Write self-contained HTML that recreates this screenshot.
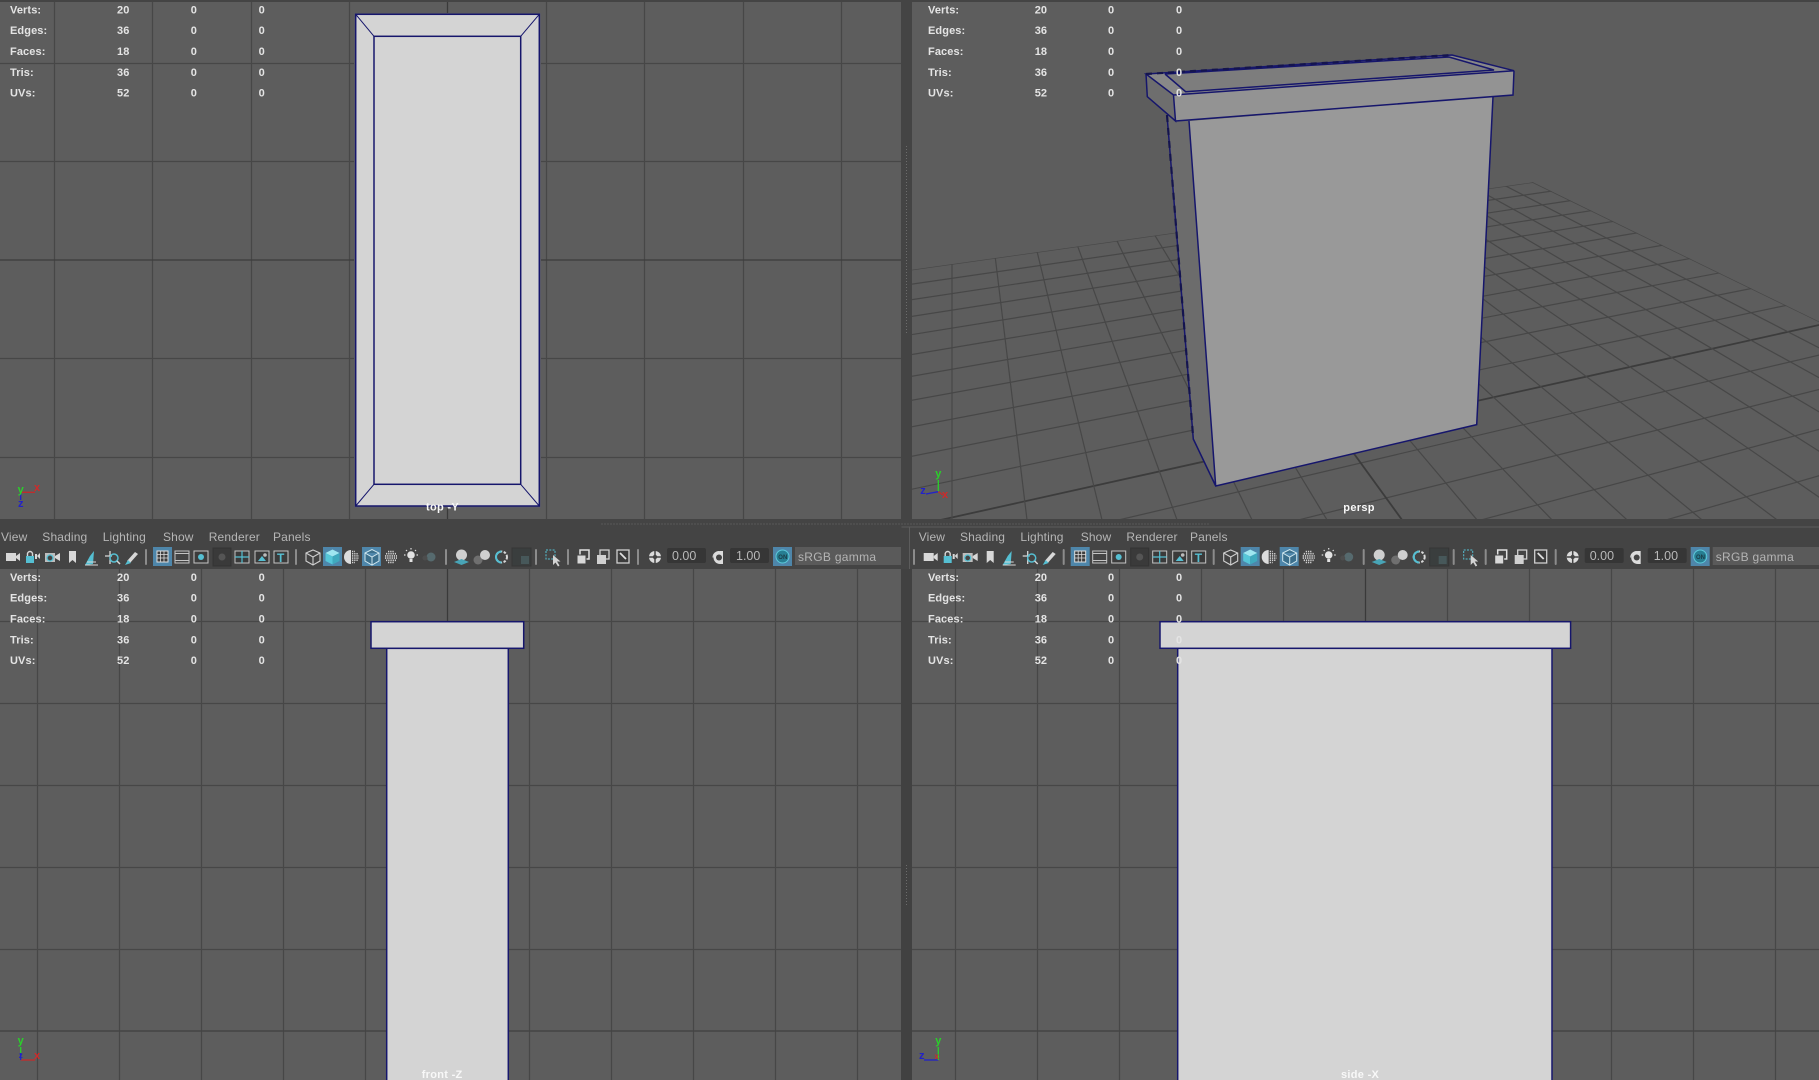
<!DOCTYPE html>
<html><head><meta charset="utf-8"><title>Viewports</title>
<style>
html,body{margin:0;padding:0;background:#444;width:1819px;height:1080px;overflow:hidden}
svg{display:block;font-family:"Liberation Sans",sans-serif}
.s{font-size:11px;font-weight:bold;fill:#e4e4e4;letter-spacing:.1px}
.m{font-size:12px;fill:#b6b6b6;letter-spacing:.15px}
.l{font-size:11px;fill:#f8f8f8;letter-spacing:.3px;font-weight:bold}
.g line{stroke:#474747;stroke-width:1.2}
.w{stroke:#16166c;stroke-width:1.5;fill:none}
.ax{font-size:11px;font-weight:bold}
</style></head><body>
<svg width="1819" height="1080" viewBox="0 0 1819 1080" xmlns="http://www.w3.org/2000/svg">
<defs>
<clipPath id="cg"><polygon points="912,269.8 1533,182.3 1819,321.5 1819,519 912,519"/></clipPath>
<clipPath id="c1"><rect x="0" y="2" width="901" height="517"/></clipPath>
<clipPath id="c3"><rect x="0" y="569" width="901" height="511"/></clipPath>
<clipPath id="c4"><rect x="912" y="569" width="907" height="511"/></clipPath>
<g id="tb">
 <!-- camera tools -->
 <rect x="6" y="553" width="10" height="8" fill="#d8d8d8"/><path d="M16 556l4-3v8l-4-3z" fill="#d8d8d8"/>
 <rect x="26" y="556" width="8" height="7" fill="#55bfd2"/><path d="M27.500 556v-2a2.500 2.500 0 0 1 5 0v2" stroke="#d8d8d8" stroke-width="1.400" fill="none"/><path d="M35 554h2v5h-2zM37 556l3-3v6z" fill="#d8d8d8"/>
 <rect x="45" y="553" width="10" height="9" fill="#bdbdbd"/><circle cx="50" cy="558" r="3" fill="#444" stroke="#55bfd2" stroke-width="1.300"/><path d="M55 556l5-3v8l-5-3z" fill="#d8d8d8"/>
 <path d="M69 551h7v12l-3.500-3-3.500 3z" fill="#d8d8d8"/>
 <path d="M85 565l8-1 1-13-4 5z" fill="#55bfd2"/><path d="M85 565h13M87 562h9" stroke="#d8d8d8" stroke-width="1" fill="none"/>
 <path d="M110 551v13M105 556h7" stroke="#d8d8d8" stroke-width="1.300"/><circle cx="114" cy="558" r="4" fill="none" stroke="#55bfd2" stroke-width="1.500"/><path d="M117 561l3 3" stroke="#d8d8d8" stroke-width="1.500"/>
 <path d="M127 561l8-9 3 2-8 9z" fill="#d8d8d8"/><path d="M125 565l3-5 3 3z" fill="#55bfd2"/>
 <rect x="145" y="549" width="2" height="16" rx="1" fill="#8c8c8c"/>
 <!-- grid etc -->
 <rect x="153" y="547" width="19" height="19" fill="#4e86aa"/>
 <rect x="157" y="551" width="11" height="11" fill="#3d3d3d" stroke="#ddd"/><path d="M160.500 551v11M164 551v11M157 554.500h11M157 558h11" stroke="#ddd" stroke-width=".8"/>
 <rect x="175" y="551" width="14" height="12" fill="#444" stroke="#c4c4c4"/><path d="M175 553.500h14M175 560.500h14" stroke="#c4c4c4"/>
 <rect x="194" y="551" width="14" height="12" fill="#3c3c3c" stroke="#c4c4c4"/><circle cx="201" cy="557" r="3" fill="#55bfd2"/>
 <rect x="213" y="548" width="18" height="18" fill="#3a3a3a" stroke="#333"/><circle cx="222" cy="557" r="3.500" fill="#555"/>
 <rect x="235" y="551" width="14" height="12" fill="#3a3a3a" stroke="#c4c4c4"/><path d="M242 551v12M235 557h14" stroke="#55bfd2" stroke-width="1.200"/>
 <rect x="255" y="551" width="14" height="12" fill="#3a3a3a" stroke="#c4c4c4"/><path d="M258 561l4-5 4 5z" fill="#55bfd2"/><circle cx="265" cy="555" r="1.800" fill="#bbb"/>
 <rect x="274" y="551" width="14" height="12" fill="#3a3a3a" stroke="#c4c4c4"/><text x="277" y="562" font-size="12" font-weight="bold" fill="#55bfd2">T</text>
 <rect x="295" y="549" width="2" height="16" rx="1" fill="#8c8c8c"/>
 <!-- shading -->
 <path d="M306 553l7-3 7 3v8l-7 4-7-4zM306 553l7 4 7-4M313 557v8" fill="none" stroke="#cfcfcf" stroke-width="1.100"/>
 <rect x="323" y="547" width="19" height="19" fill="#4e86aa"/><path d="M325.500 553l7-3.500 7 3.500-7 3.500z" fill="#9fe6f0"/><path d="M325.500 553l7 3.500v8l-7-3.500z" fill="#55c6d8"/><path d="M339.500 553l-7 3.500v8l7-3.500z" fill="#3fa9bd"/>
 <path d="M351 550a7 7 0 0 0 0 14z" fill="#dcdcdc"/><path d="M352 551.500h3M352 553.700h6M352 555.900h7M352 558.100h7M352 560.300h6M352 562.500h3" stroke="#d0d0d0" stroke-width="1.500" stroke-dasharray="1.300 .9"/>
 <rect x="362" y="547" width="19" height="19" fill="#4e86aa"/><path d="M365 553l7-3.500 7 3.500v8l-7 4-7-4zM365 553l7 4 7-4M372 557v8" fill="#3b6f8c" stroke="#cfe6ee" stroke-width="1"/>
 <path d="M388 551.500h6M386 553.700h10M385 555.900h12M385 558.100h12M386 560.300h10M388 562.500h6" stroke="#d0d0d0" stroke-width="1.600" stroke-dasharray="1.300 .9"/>
 <circle cx="411" cy="555" r="3.800" fill="#e2e2e2"/><rect x="409.500" y="559" width="3" height="3" fill="#e2e2e2"/><path d="M411 548v1.500M404 555h1.500M416.500 555h1.500M406 550l1 1M416 550l-1 1" stroke="#ddd" stroke-width="1.200"/>
 <circle cx="431" cy="557" r="4.500" fill="#566a6e"/><circle cx="425" cy="558" r="2.500" fill="#4d4d4d"/>
 <rect x="445" y="549" width="2" height="16" rx="1" fill="#8c8c8c"/>
 <circle cx="461.500" cy="555" r="5.500" fill="#cfcfcf"/><path d="M454 562l7.500-3 7.500 3-7.500 3z" fill="#48a4b6"/>
 <circle cx="478" cy="560" r="4.500" fill="#6f6f6f"/><circle cx="485" cy="555" r="5" fill="#cfcfcf"/>
 <circle cx="501.500" cy="557" r="5.500" fill="none" stroke="#d8d8d8" stroke-width="2" stroke-dasharray="2.500 1.500"/><path d="M501.500 551.500a5.500 5.500 0 0 0 0 11" fill="none" stroke="#55bfd2" stroke-width="2"/>
 <rect x="512" y="548" width="19" height="18" fill="#3a3e3e" stroke="#363636"/><rect x="521" y="556" width="8" height="8" fill="#47585a"/>
 <rect x="535" y="549" width="2" height="16" rx="1" fill="#8c8c8c"/>
 <rect x="546" y="550" width="9" height="9" fill="none" stroke="#55bfd2" stroke-dasharray="2 1.300"/><path d="M553 555l0 10 2.500-2.500 2.500 4 1.500-1-2.500-4h3.500z" fill="#d4d4d4"/>
 <rect x="567" y="549" width="2" height="16" rx="1" fill="#8c8c8c"/>
 <rect x="580" y="550" width="9" height="9" fill="none" stroke="#e0e0e0" stroke-width="1.500"/><rect x="577" y="555" width="9" height="9" fill="#d8d8d8" stroke="#444"/>
 <rect x="600" y="550" width="9" height="9" fill="none" stroke="#cfcfcf" stroke-width="1.300"/><rect x="597" y="555" width="9" height="9" fill="#d0d0d0"/>
 <rect x="617" y="550" width="12" height="13" fill="#3c3c3c" stroke="#d0d0d0" stroke-width="1.300"/><path d="M620 553l6 6" stroke="#e0e0e0" stroke-width="1.800"/>
 <rect x="637" y="549" width="2" height="16" rx="1" fill="#8c8c8c"/>
 <circle cx="655" cy="557" r="6" fill="#dcdcdc"/><path d="M655 551v5M661 557h-5M655 563v-5M649 557h5" stroke="#444" stroke-width="1.500"/><circle cx="655" cy="557" r="2.200" fill="#444"/>
 <rect x="667" y="548" width="39" height="15" rx="2" fill="#363636"/>
 <text x="672" y="560" font-size="12.500" fill="#b8b8b8">0.00</text>
 <path d="M720 551h3v13h-3a6.500 6.500 0 0 1 0-13z" fill="#dcdcdc"/><circle cx="719" cy="557.500" r="3" fill="#444"/><path d="M713 557.500a6 6 0 0 1 6-6" stroke="#ddd" fill="none"/>
 <rect x="730" y="548" width="39" height="15" rx="2" fill="#363636"/>
 <text x="736" y="560" font-size="12.500" fill="#b8b8b8">1.00</text>
 <rect x="773" y="547" width="19" height="19" fill="#4e86aa"/><circle cx="782.500" cy="556.500" r="6.500" fill="#277e92" stroke="#5cc9da"/>
 <text x="778.300" y="558.800" font-size="6" font-weight="bold" fill="#1b3c46">ON</text>
</g>
</defs>

<!-- base -->
<rect width="1819" height="1080" fill="#444"/>
<rect x="0" y="2" width="901" height="517" fill="#5d5d5d"/>
<rect x="912" y="2" width="907" height="517" fill="#5d5d5d"/>
<rect x="0" y="569" width="901" height="511" fill="#5d5d5d"/>
<rect x="912" y="569" width="907" height="511" fill="#5d5d5d"/>

<!-- top grid -->
<g class="g" clip-path="url(#c1)">
<line x1="54.500" y1="0" x2="54.500" y2="519"/><line x1="152.500" y1="0" x2="152.500" y2="519"/><line x1="251.500" y1="0" x2="251.500" y2="519"/><line x1="349.500" y1="0" x2="349.500" y2="519"/>
<line x1="546.500" y1="0" x2="546.500" y2="519"/><line x1="644.500" y1="0" x2="644.500" y2="519"/><line x1="743.500" y1="0" x2="743.500" y2="519"/><line x1="841.500" y1="0" x2="841.500" y2="519"/>
<line x1="0" y1="63.500" x2="901" y2="63.500"/><line x1="0" y1="161.500" x2="901" y2="161.500"/><line x1="0" y1="358.500" x2="901" y2="358.500"/><line x1="0" y1="457.500" x2="901" y2="457.500"/>
<line x1="447.500" y1="0" x2="447.500" y2="519" style="stroke:#3a3a3a;stroke-width:1.300"/><line x1="0" y1="260" x2="901" y2="260" style="stroke:#3c3c3c;stroke-width:1.300"/>
</g>
<rect x="354" y="13" width="187" height="495" fill="#5c5c66"/>
<rect x="355.700" y="14.300" width="183.600" height="491.700" fill="#d4d4d4" class="w" style="fill:#d4d4d4"/>
<rect x="374" y="36.300" width="146.700" height="448" class="w"/>
<path d="M355.700 14.300L374 36.300M539.300 14.300L520.700 36.300M355.700 506L374 484.300M539.300 506L520.700 484.300" class="w" style="stroke-width:1"/>

<!-- persp grid -->
<g class="g" clip-path="url(#cg)">
<line x1="900" y1="741.200" x2="4076" y2="-176"/><line x1="900" y1="675.800" x2="4076" y2="-176"/><line x1="900" y1="619.800" x2="4076" y2="-176"/><line x1="900" y1="571.400" x2="4076" y2="-176"/>
<line x1="900" y1="529" x2="4076" y2="-176" style="stroke:#3c3c3c;stroke-width:1.800"/>
<line x1="900" y1="491.700" x2="4076" y2="-176"/><line x1="900" y1="458.600" x2="4076" y2="-176"/><line x1="900" y1="429" x2="4076" y2="-176"/><line x1="900" y1="402.400" x2="4076" y2="-176"/><line x1="900" y1="378.300" x2="4076" y2="-176"/><line x1="900" y1="356.500" x2="4076" y2="-176"/><line x1="900" y1="336.500" x2="4076" y2="-176"/><line x1="900" y1="318.200" x2="4076" y2="-176"/><line x1="900" y1="301.400" x2="4076" y2="-176"/><line x1="900" y1="285.900" x2="4076" y2="-176"/><line x1="900" y1="271.500" x2="4076" y2="-176"/>
<line x1="952" y1="-100" x2="952" y2="600"/><line x1="952" y1="-100" x2="1036.700" y2="600"/><line x1="952" y1="-100" x2="1121.400" y2="600"/><line x1="952" y1="-100" x2="1206.100" y2="600"/><line x1="952" y1="-100" x2="1290.800" y2="600"/><line x1="952" y1="-100" x2="1375.500" y2="600"/>
<line x1="952" y1="-100" x2="1460.200" y2="600" style="stroke:#3c3c3c;stroke-width:1.800"/>
<line x1="952" y1="-100" x2="1544.900" y2="600"/><line x1="952" y1="-100" x2="1629.600" y2="600"/><line x1="952" y1="-100" x2="1714.300" y2="600"/><line x1="952" y1="-100" x2="1799" y2="600"/><line x1="952" y1="-100" x2="1883.700" y2="600"/><line x1="952" y1="-100" x2="1968.400" y2="600"/><line x1="952" y1="-100" x2="2053.100" y2="600"/><line x1="952" y1="-100" x2="2137.800" y2="600"/><line x1="952" y1="-100" x2="2222.500" y2="600"/><line x1="952" y1="-100" x2="2307.200" y2="600"/><line x1="952" y1="-100" x2="2391.900" y2="600"/>
</g>

<!-- persp model -->
<polygon points="1167,115 1193.300,439 1215.700,486 1189,121" fill="#6c6c6c"/>
<polygon points="1189,121 1215.700,486 1476.700,424.600 1493,96.700" fill="#999"/>
<polygon points="1146,74 1173.500,95 1175.500,121 1147.300,96.700" fill="#6e6e6e"/>
<polygon points="1173.500,95 1514,70.700 1513,95 1175.500,121" fill="#939393"/>
<polygon points="1146,74 1452,55 1514,70.700 1173.500,95" fill="#888"/>
<polygon points="1165,74 1449,57 1494,70 1185.700,91.700" fill="#7d7d7d"/>
<path d="M1167 115L1193.300 439L1215.700 486L1476.700 424.600L1493 96.700M1189 121L1215.700 486" class="w"/>
<path d="M1167 115L1193.300 439" stroke="#14144e" stroke-width="2.200" stroke-dasharray="7 6" fill="none"/>
<path d="M1146 74L1452 55L1514 70.700L1173.500 95ZM1146 74L1147.300 96.700L1175.500 121L1173.500 95M1175.500 121L1513 95L1514 70.700M1165 74L1185.700 91.700L1494 70L1449 57L1165 74" class="w"/>
<path d="M1146 74L1452 55" stroke="#14144e" stroke-width="2.200" stroke-dasharray="6 5" fill="none"/>

<!-- front grid -->
<g class="g" clip-path="url(#c3)">
<line x1="37.500" y1="569" x2="37.500" y2="1080"/><line x1="119.500" y1="569" x2="119.500" y2="1080"/><line x1="201.500" y1="569" x2="201.500" y2="1080"/><line x1="283.500" y1="569" x2="283.500" y2="1080"/><line x1="365.500" y1="569" x2="365.500" y2="1080"/><line x1="529.500" y1="569" x2="529.500" y2="1080"/><line x1="611.500" y1="569" x2="611.500" y2="1080"/><line x1="693.500" y1="569" x2="693.500" y2="1080"/><line x1="775.500" y1="569" x2="775.500" y2="1080"/><line x1="857.500" y1="569" x2="857.500" y2="1080"/>
<line x1="0" y1="621.500" x2="901" y2="621.500"/><line x1="0" y1="703.500" x2="901" y2="703.500"/><line x1="0" y1="785.500" x2="901" y2="785.500"/><line x1="0" y1="867.500" x2="901" y2="867.500"/><line x1="0" y1="949.500" x2="901" y2="949.500"/>
<line x1="447.500" y1="569" x2="447.500" y2="1080" style="stroke:#3a3a3a;stroke-width:1.300"/><line x1="0" y1="1031" x2="901" y2="1031" style="stroke:#444;stroke-width:1.500"/>
</g>
<rect x="386.700" y="648.300" width="121.600" height="440" fill="#d4d4d4" class="w" style="fill:#d4d4d4"/>
<rect x="371" y="621.700" width="152.700" height="26.600" class="w" style="fill:#d4d4d4"/>

<!-- side grid -->
<g class="g" clip-path="url(#c4)">
<line x1="955.500" y1="569" x2="955.500" y2="1080"/><line x1="1037.500" y1="569" x2="1037.500" y2="1080"/><line x1="1119.500" y1="569" x2="1119.500" y2="1080"/><line x1="1201.500" y1="569" x2="1201.500" y2="1080"/><line x1="1283.500" y1="569" x2="1283.500" y2="1080"/><line x1="1447.500" y1="569" x2="1447.500" y2="1080"/><line x1="1529.500" y1="569" x2="1529.500" y2="1080"/><line x1="1611.500" y1="569" x2="1611.500" y2="1080"/><line x1="1693.500" y1="569" x2="1693.500" y2="1080"/><line x1="1775.500" y1="569" x2="1775.500" y2="1080"/>
<line x1="912" y1="621.500" x2="1819" y2="621.500"/><line x1="912" y1="703.500" x2="1819" y2="703.500"/><line x1="912" y1="785.500" x2="1819" y2="785.500"/><line x1="912" y1="867.500" x2="1819" y2="867.500"/><line x1="912" y1="949.500" x2="1819" y2="949.500"/>
<line x1="1365.500" y1="569" x2="1365.500" y2="1080" style="stroke:#3a3a3a;stroke-width:1.300"/><line x1="912" y1="1031" x2="1819" y2="1031" style="stroke:#444;stroke-width:1.500"/>
</g>
<rect x="1177.700" y="648.300" width="374.300" height="440" class="w" style="fill:#d4d4d4"/>
<rect x="1160" y="621.700" width="410.600" height="26.600" class="w" style="fill:#d4d4d4"/>

<!-- toolbars -->
<rect x="0" y="519" width="1819" height="50" fill="#444"/>
<rect x="901" y="569" width="11" height="511" fill="#414141"/>
<rect x="901" y="0" width="11" height="519" fill="#444"/>
<path d="M601.500 524H1210" stroke="#6c6c6c" stroke-dasharray="1 2"/>
<path d="M906.500 146V335M906.500 865V905" stroke="#6c6c6c" stroke-dasharray="1 2"/>
<path d="M901.500 527H1819M909.500 527V569" stroke="#5c5c5c"/>
<rect x="795" y="547" width="106" height="18" fill="#5a5a5a"/>
<rect x="1712.700" y="547" width="106.300" height="18" fill="#5a5a5a"/>
<use href="#tb"/>
<use href="#tb" x="917.700"/>
<rect x="913" y="549" width="2" height="16" rx="1" fill="#8c8c8c"/>

<text class="m" y="541"><tspan x="1">View</tspan><tspan x="42.300">Shading</tspan><tspan x="102.700">Lighting</tspan><tspan x="163">Show</tspan><tspan x="208.700">Renderer</tspan><tspan x="273">Panels</tspan></text>
<text class="m" y="541"><tspan x="918.700">View</tspan><tspan x="960">Shading</tspan><tspan x="1020.400">Lighting</tspan><tspan x="1080.700">Show</tspan><tspan x="1126.400">Renderer</tspan><tspan x="1190">Panels</tspan></text>
<text x="798" y="561" font-size="12" fill="#b4b4b4" letter-spacing=".3">sRGB gamma</text>
<text x="1715.700" y="561" font-size="12" fill="#b4b4b4" letter-spacing=".3">sRGB gamma</text>

<!-- stats -->
<g class="s">
<text y="13.500"><tspan x="10">Verts:</tspan><tspan x="117">20</tspan><tspan x="190.700">0</tspan><tspan x="258.600">0</tspan></text>
<text y="34"><tspan x="10">Edges:</tspan><tspan x="117">36</tspan><tspan x="190.700">0</tspan><tspan x="258.600">0</tspan></text>
<text y="55"><tspan x="10">Faces:</tspan><tspan x="117">18</tspan><tspan x="190.700">0</tspan><tspan x="258.600">0</tspan></text>
<text y="76"><tspan x="10">Tris:</tspan><tspan x="117">36</tspan><tspan x="190.700">0</tspan><tspan x="258.600">0</tspan></text>
<text y="96.500"><tspan x="10">UVs:</tspan><tspan x="117">52</tspan><tspan x="190.700">0</tspan><tspan x="258.600">0</tspan></text>

<text y="13.500"><tspan x="928">Verts:</tspan><tspan x="1034.700">20</tspan><tspan x="1108">0</tspan><tspan x="1176">0</tspan></text>
<text y="34"><tspan x="928">Edges:</tspan><tspan x="1034.700">36</tspan><tspan x="1108">0</tspan><tspan x="1176">0</tspan></text>
<text y="55"><tspan x="928">Faces:</tspan><tspan x="1034.700">18</tspan><tspan x="1108">0</tspan><tspan x="1176">0</tspan></text>
<text y="76"><tspan x="928">Tris:</tspan><tspan x="1034.700">36</tspan><tspan x="1108">0</tspan><tspan x="1176">0</tspan></text>
<text y="96.500"><tspan x="928">UVs:</tspan><tspan x="1034.700">52</tspan><tspan x="1108">0</tspan><tspan x="1176">0</tspan></text>

<text y="581"><tspan x="10">Verts:</tspan><tspan x="117">20</tspan><tspan x="190.700">0</tspan><tspan x="258.600">0</tspan></text>
<text y="601.700"><tspan x="10">Edges:</tspan><tspan x="117">36</tspan><tspan x="190.700">0</tspan><tspan x="258.600">0</tspan></text>
<text y="622.700"><tspan x="10">Faces:</tspan><tspan x="117">18</tspan><tspan x="190.700">0</tspan><tspan x="258.600">0</tspan></text>
<text y="643.300"><tspan x="10">Tris:</tspan><tspan x="117">36</tspan><tspan x="190.700">0</tspan><tspan x="258.600">0</tspan></text>
<text y="664"><tspan x="10">UVs:</tspan><tspan x="117">52</tspan><tspan x="190.700">0</tspan><tspan x="258.600">0</tspan></text>

<text y="581"><tspan x="928">Verts:</tspan><tspan x="1034.700">20</tspan><tspan x="1108">0</tspan><tspan x="1176">0</tspan></text>
<text y="601.700"><tspan x="928">Edges:</tspan><tspan x="1034.700">36</tspan><tspan x="1108">0</tspan><tspan x="1176">0</tspan></text>
<text y="622.700"><tspan x="928">Faces:</tspan><tspan x="1034.700">18</tspan><tspan x="1108">0</tspan><tspan x="1176">0</tspan></text>
<text y="643.300"><tspan x="928">Tris:</tspan><tspan x="1034.700">36</tspan><tspan x="1108">0</tspan><tspan x="1176">0</tspan></text>
<text y="664"><tspan x="928">UVs:</tspan><tspan x="1034.700">52</tspan><tspan x="1108">0</tspan><tspan x="1176">0</tspan></text>
</g>

<!-- view labels -->
<text class="l" x="426" y="510.500">top -Y</text>
<text class="l" x="1343.300" y="511">persp</text>
<text class="l" x="421.700" y="1078">front -Z</text>
<text class="l" x="1341" y="1078">side -X</text>

<!-- axes -->
<g stroke-width="1.300" fill="none">
<path d="M20.700 492.300H35" stroke="#c62a2a"/><path d="M20.700 492.300V500" stroke="#2222c8"/>
<path d="M20.700 1060H35" stroke="#c62a2a"/><path d="M20.700 1060V1047" stroke="#2ad02a"/><path d="M20.700 1060V1053" stroke="#2222c8"/>
<path d="M938.300 1060H924" stroke="#2222c8"/><path d="M938.300 1060V1047" stroke="#2ad02a"/>
<path d="M938.300 491.700V480" stroke="#2ad02a"/><path d="M938.300 491.700L926 494" stroke="#2222c8"/><path d="M938.300 491.700L943 495" stroke="#c62a2a"/>
</g>
<g class="ax" text-anchor="middle">
<text x="20.700" y="493" fill="#2ad02a">y</text><text x="37" y="491" fill="#d02a2a">x</text><text x="20.700" y="507" fill="#2222c8">z</text>
<text x="20.700" y="1044" fill="#2ad02a">y</text><text x="37" y="1059" fill="#d02a2a">x</text><text x="20.700" y="1058" fill="#2222c8" font-size="8">z</text>
<text x="938.300" y="1044" fill="#2ad02a">y</text><text x="921.700" y="1059" fill="#2222c8">z</text><text x="936.700" y="1059" fill="#d02a2a" font-size="8">x</text>
<text x="938.300" y="477" fill="#2ad02a">y</text><text x="923" y="494" fill="#2222c8">z</text><text x="945" y="498" fill="#d02a2a">x</text>
</g>
</svg>
</body></html>
